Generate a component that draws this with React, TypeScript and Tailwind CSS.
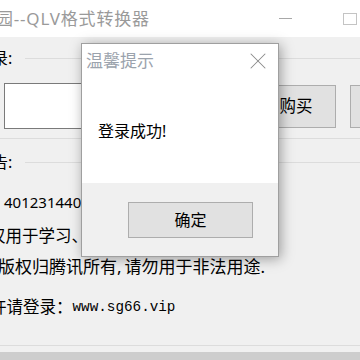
import { X } from "lucide-react";

function Dialog() {
  return (
    <div className="absolute left-[81px] top-[43px] w-[198px] h-[214px] border border-[#9f9f9f] bg-white shadow-[2px_2px_12px_rgba(0,0,0,0.35)] flex flex-col">
      <div className="h-[139px] bg-white flex flex-col">
        <div className="h-[33px] flex items-center pl-[4px] pr-[6px]">
          <span className="text-[17px] leading-[20px] text-[#9ba3ad]">温馨提示</span>
          <X className="ml-auto w-[28px] h-[28px] text-[#8a8a8a]" strokeWidth={0.9} />
        </div>
        <p className="mt-[44px] pl-[16px] text-[16px] leading-[20px] text-black">登录成功!</p>
      </div>
      <div className="flex-1 bg-[#f0f0f0] flex justify-end items-start pt-[19px] pr-[25px]">
        <button className="w-[125px] h-[36px] border border-[#adadad] bg-[#e1e1e1] text-[16px] text-black">
          确定
        </button>
      </div>
    </div>
  );
}

export default function App() {
  return (
    <div className="relative w-[360px] h-[360px] overflow-hidden bg-[#f0f0f0] font-['Noto_Sans','Noto_Sans_CJK_SC',sans-serif] text-black">
      {/* title bar */}
      <div className="h-[37px] bg-white flex items-center">
        <span className="-ml-[4px] text-[17px] leading-[20px] tracking-[0.8px] text-[#9a9a9a] whitespace-nowrap">园--QLV格式转换器</span>
        <div className="flex-1" />
        <span className="w-[13px] h-px bg-[#a8a8a8]" />
        <span className="ml-[51px] w-[14px] h-[12px] border border-[#c4c4c4]" />
        <span className="w-[3px]" />
      </div>

      {/* group 1 */}
      <div className="mt-[13px] h-[16px] flex items-center">
        <span className="-ml-[8px] text-[16px] leading-[16px] whitespace-nowrap">录:</span>
        <span className="ml-[13px] flex-1 h-px bg-[#dcdcdc]" />
      </div>
      <div className="mt-[17px] flex items-center pl-[4px]">
        <div className="shrink-0 w-[240px] h-[46px] bg-white border border-[#7a7a7a]" />
        <button className="shrink-0 ml-[12px] w-[80px] h-[43px] border border-[#adadad] bg-[#e1e1e1] text-[16.5px]">
          购买
        </button>
        <button className="shrink-0 ml-[14px] w-[80px] h-[43px] border border-[#adadad] bg-[#e1e1e1] text-[16.5px]">
          格式
        </button>
      </div>
      <div className="mt-[9px] h-px bg-[#dcdcdc]" />

      {/* group 2 */}
      <div className="mt-[15px] h-[16px] flex items-center">
        <span className="-ml-[8px] text-[16px] leading-[16px] whitespace-nowrap">告:</span>
        <span className="ml-[13px] flex-1 h-px bg-[#dcdcdc]" />
      </div>
      <div className="mt-[22px] h-[20px] pl-[4px] text-[15px] leading-[20px] whitespace-nowrap">401231440</div>
      <div className="mt-[14px] h-[20px] -ml-[11px] text-[16.5px] leading-[20px] whitespace-nowrap">仅用于学习、交流使用</div>
      <div className="mt-[11px] h-[20px] -ml-[2px] text-[17px] leading-[20px] whitespace-nowrap">
        版权归腾讯所有<span className="mr-[3px]">,</span>请勿用于非法用途.
      </div>
      <div className="mt-[20px] h-[20px] -ml-[10px] flex items-center whitespace-nowrap">
        <span className="text-[16.5px] leading-[20px]">许请登录：</span>
        <span className="text-[14.3px] leading-[20px] font-['Liberation_Mono',monospace]">www.sg66.vip</span>
      </div>
      <div className="mt-[28px] h-px bg-[#dcdcdc]" />
      <div className="mt-[6px] h-[10px] bg-[#cdcdcd]" />

      <Dialog />
    </div>
  );
}
